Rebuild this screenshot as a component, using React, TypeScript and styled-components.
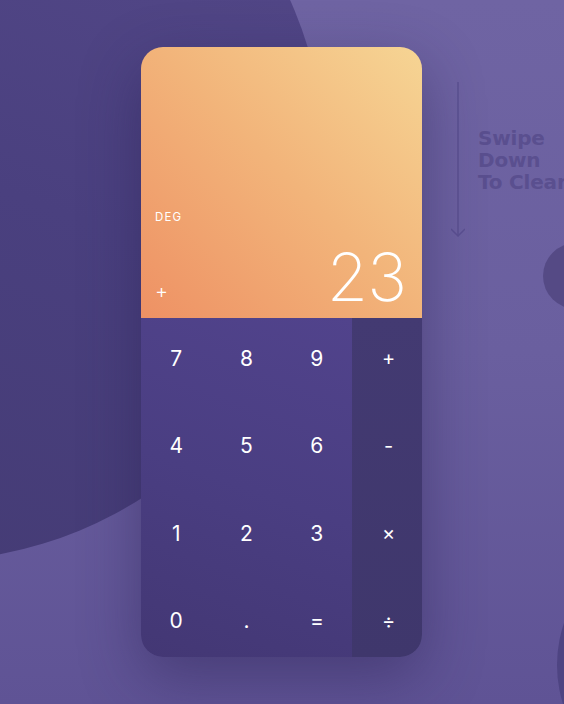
import React from "react";
import styled, { createGlobalStyle } from "styled-components";

const Global = createGlobalStyle`
  html, body { margin: 0; padding: 0; }
  body { width: 564px; height: 704px; overflow: hidden; font-family: Inter, "Liberation Sans", sans-serif; }
`;

const Stage = styled.div`
  position: relative;
  width: 564px;
  height: 704px;
  overflow: hidden;
  background: linear-gradient(180deg, #6f64a3 0%, #6a5f9f 50%, #5f5395 100%);
  display: flex;
  justify-content: flex-start;
  padding: 47px 0 0 141px;
  box-sizing: border-box;
`;

const Blob = styled.div<{ $x: number; $y: number; $r: number; $bg: string }>`
  position: absolute;
  left: ${(p) => p.$x - p.$r}px;
  top: ${(p) => p.$y - p.$r}px;
  width: ${(p) => p.$r * 2}px;
  height: ${(p) => p.$r * 2}px;
  border-radius: 50%;
  background: ${(p) => p.$bg};
`;

const Hint = styled.div`
  position: absolute;
  left: 451px;
  top: 82px;
  display: flex;
  gap: 13px;
`;

const HintText = styled.div`
  margin-top: 45px;
  font-family: "DejaVu Sans", "Liberation Sans", sans-serif;
  font-weight: 700;
  font-size: 20px;
  line-height: 22px;
  color: #5a4f8f;
  white-space: nowrap;
  letter-spacing: -0.2px;
`;

const Card = styled.div`
  position: relative;
  width: 281px;
  height: 610px;
  border-radius: 22px;
  overflow: hidden;
  display: flex;
  flex-direction: column;
  box-shadow: 0 20px 60px rgba(40, 30, 80, 0.45);
`;

const Display = styled.div`
  height: 271px;
  flex: none;
  background: linear-gradient(225deg, #f6d594 0%, #f2b47a 48%, #ee9164 100%);
  display: flex;
  flex-direction: column;
  justify-content: flex-end;
  padding: 0 16px 12px 14px;
  box-sizing: border-box;
  color: #fff;
`;

const Deg = styled.div`
  font-size: 11.5px;
  letter-spacing: 1.1px;
  font-weight: 400;
  margin-bottom: 24px;
`;

const Bottom = styled.div`
  display: flex;
  justify-content: space-between;
  align-items: flex-end;
`;

const Plus = styled.div`
  font-size: 20px;
  font-weight: 300;
  line-height: 20px;
  margin-bottom: 5px;
`;

const Value = styled.div`
  font-size: 67px;
  font-weight: 200;
  line-height: 58px;
  letter-spacing: -1px;
`;

const Pad = styled.div`
  flex: 1;
  display: grid;
  grid-template-columns: 211px 70px;
`;

const Digits = styled.div`
  background: linear-gradient(200deg, #51438c 0%, #4a3e82 50%, #433774 100%);
  display: grid;
  grid-template-columns: repeat(3, 1fr);
  grid-template-rows: repeat(4, 40px);
  align-content: space-between;
  padding: 20px 0 16px;
`;

const Ops = styled.div`
  background: linear-gradient(180deg, #433a72 0%, #3f376c 100%);
  display: grid;
  grid-template-rows: repeat(4, 40px);
  align-content: space-between;
  padding: 20px 0 16px 3px;
`;

const Key = styled.div<{ $op?: boolean }>`
  display: flex;
  align-items: center;
  justify-content: center;
  color: #fff;
  font-size: ${(p) => (p.$op ? "20px" : "21px")};
  font-weight: 400;
`;

const digits = ["7", "8", "9", "4", "5", "6", "1", "2", "3", "0", ".", "="];
const ops = ["+", "-", "×", "÷"];

export default function App() {
  return (
    <>
      <Global />
      <Stage>
        <Blob $x={-73} $y={163} $r={398} $bg="linear-gradient(200deg, #574b8c 0%, #4a407f 50%, #433a72 100%)" />
        <Blob $x={576} $y={276} $r={33} $bg="#554a85" />
        <Blob $x={686} $y={665} $r={129} $bg="#4e4482" />
        <Hint>
          <svg width="14" height="156" viewBox="0 0 14 156">
            <line x1="7" y1="0" x2="7" y2="154" stroke="#5b5091" strokeWidth="1.5" />
            <polyline points="0,147 7,154 14,147" fill="none" stroke="#5b5091" strokeWidth="1.5" />
          </svg>
          <HintText>
            Swipe
            <br />
            Down
            <br />
            To Clear
          </HintText>
        </Hint>
        <Card>
          <Display>
            <Deg>DEG</Deg>
            <Bottom>
              <Plus>+</Plus>
              <Value>23</Value>
            </Bottom>
          </Display>
          <Pad>
            <Digits>
              {digits.map((d) => (
                <Key key={d}>{d}</Key>
              ))}
            </Digits>
            <Ops>
              {ops.map((o) => (
                <Key key={o} $op>
                  {o}
                </Key>
              ))}
            </Ops>
          </Pad>
        </Card>
      </Stage>
    </>
  );
}
